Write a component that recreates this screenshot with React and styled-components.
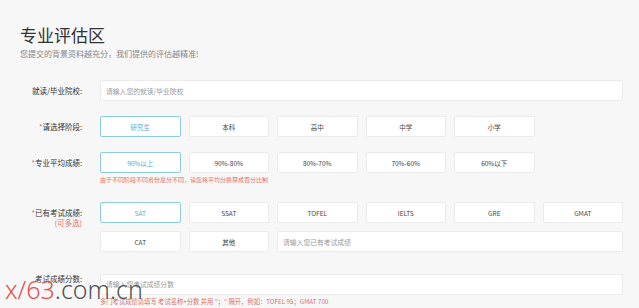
import React, { useState } from "react";
import styled, { createGlobalStyle } from "styled-components";

const Global = createGlobalStyle`
  html, body { margin: 0; padding: 0; background: #f7f7f7; }
  body { font-family: "Noto Sans CJK SC", "Noto Sans", sans-serif; color: #333; }
  * { box-sizing: border-box; }
`;

const Page = styled.div`
  position: relative;
  width: 639px;
  height: 308px;
  overflow: hidden;
  padding: 25px 16px 0 20px;
`;

const Title = styled.h1`
  margin: 0;
  font-size: 17px;
  line-height: 20px;
  font-weight: 400;
  color: #333;
`;

const Subtitle = styled.p`
  margin: 4px 0 0;
  font-size: 8px;
  line-height: 10px;
  color: #888;
`;

const Form = styled.div`
  margin-top: 21px;
`;

const Row = styled.div`
  display: grid;
  grid-template-columns: 62px 1fr;
  column-gap: 18px;
  margin-bottom: ${(p) => p.$mb}px;
`;

const Label = styled.div`
  text-align: right;
  font-size: 7.5px;
  line-height: 10px;
  padding-top: 5.5px;
  color: #333;
  white-space: nowrap;
`;

const Star = styled.span`
  color: #e05a5a;
`;

const Sub = styled.div`
  color: #d9706f;
`;

const Grid = styled.div`
  display: grid;
  grid-template-columns: repeat(6, 1fr);
  gap: 8px;
`;

const Option = styled.button`
  height: 21px;
  padding: 0;
  background: #fff;
  border: 1px solid ${(p) => (p.$active ? "#8ccbe0" : "#ebebeb")};
  border-radius: 2px;
  font-family: "Noto Sans CJK SC", "Noto Sans", sans-serif;
  font-size: 6.5px;
  color: ${(p) => (p.$active ? "#5aa9d1" : "#444")};
  cursor: pointer;
`;

const Input = styled.input`
  height: 21px;
  width: 100%;
  padding: 0 5px;
  background: #fff;
  border: 1px solid #ebebeb;
  border-radius: 2px;
  font-family: "Noto Sans CJK SC", "Noto Sans", sans-serif;
  font-size: 6.8px;
  color: #333;
  outline: none;
  grid-column: ${(p) => p.$span || "auto"};
  &::placeholder { color: #9a9a9a; }
`;

const Hint = styled.div`
  margin-top: 3px;
  font-size: ${(p) => p.$size || 6}px;
  line-height: 8px;
  color: #d9706f;
  white-space: nowrap;
`;

const Watermark = styled.div`
  position: absolute;
  left: 5px;
  top: 276px;
  font-family: "Noto Sans", "DejaVu Sans", sans-serif;
  font-weight: 300;
  font-size: 25px;
  line-height: 27px;
  color: #555;
  pointer-events: none;
`;

const Red = styled.span`
  color: #e0524c;
`;

const stages = ["研究生", "本科", "高中", "中学", "小学"];
const grades = ["90%以上", "90%-80%", "80%-70%", "70%-60%", "60%以下"];
const exams = ["SAT", "SSAT", "TOFEL", "IELTS", "GRE", "GMAT", "CAT", "其他"];

export default function App() {
  const [stage, setStage] = useState(0);
  const [grade, setGrade] = useState(0);
  const [exam, setExam] = useState([0]);
  const toggle = (i) =>
    setExam((e) => (e.includes(i) ? e.filter((x) => x !== i) : [...e, i]));
  return (
    <Page>
      <Global />
      <Title>专业评估区</Title>
      <Subtitle>您提交的背景资料越充分，我们提供的评估越精准!</Subtitle>
      <Form>
        <Row $mb={15}>
          <Label>就读/毕业院校:</Label>
          <Input placeholder="请输入您的就读/毕业院校" />
        </Row>
        <Row $mb={15}>
          <Label>
            <Star>*</Star>请选择阶段:
          </Label>
          <Grid>
            {stages.map((s, i) => (
              <Option key={s} $active={stage === i} onClick={() => setStage(i)}>
                {s}
              </Option>
            ))}
          </Grid>
        </Row>
        <Row $mb={18}>
          <Label>
            <Star>*</Star>专业平均成绩:
          </Label>
          <div>
            <Grid>
              {grades.map((s, i) => (
                <Option key={s} $active={grade === i} onClick={() => setGrade(i)}>
                  {s}
                </Option>
              ))}
            </Grid>
            <Hint>由于不同阶段不同省份总分不同，请您将平均分换算成百分比制</Hint>
          </div>
        </Row>
        <Row $mb={16}>
          <Label>
            <Star>*</Star>已有考试成绩:
            <Sub>(可多选)</Sub>
          </Label>
          <Grid>
            {exams.map((s, i) => (
              <Option key={s} $active={exam.includes(i)} onClick={() => toggle(i)}>
                {s}
              </Option>
            ))}
            <Input $span="3 / 7" placeholder="请输入您已有考试成绩" />
          </Grid>
        </Row>
        <Row $mb={0}>
          <Label>考试成绩分数:</Label>
          <div>
            <Input placeholder="请输入您考试成绩分数" />
            <Hint $size={6.3}>多门考试成绩请填写 考试名称+分数 并用 "；" 隔开，例如：TOFEL 95；GMAT 700</Hint>
          </div>
        </Row>
      </Form>
      <Watermark>
        <Red>x/63</Red>.com.cn
      </Watermark>
    </Page>
  );
}
